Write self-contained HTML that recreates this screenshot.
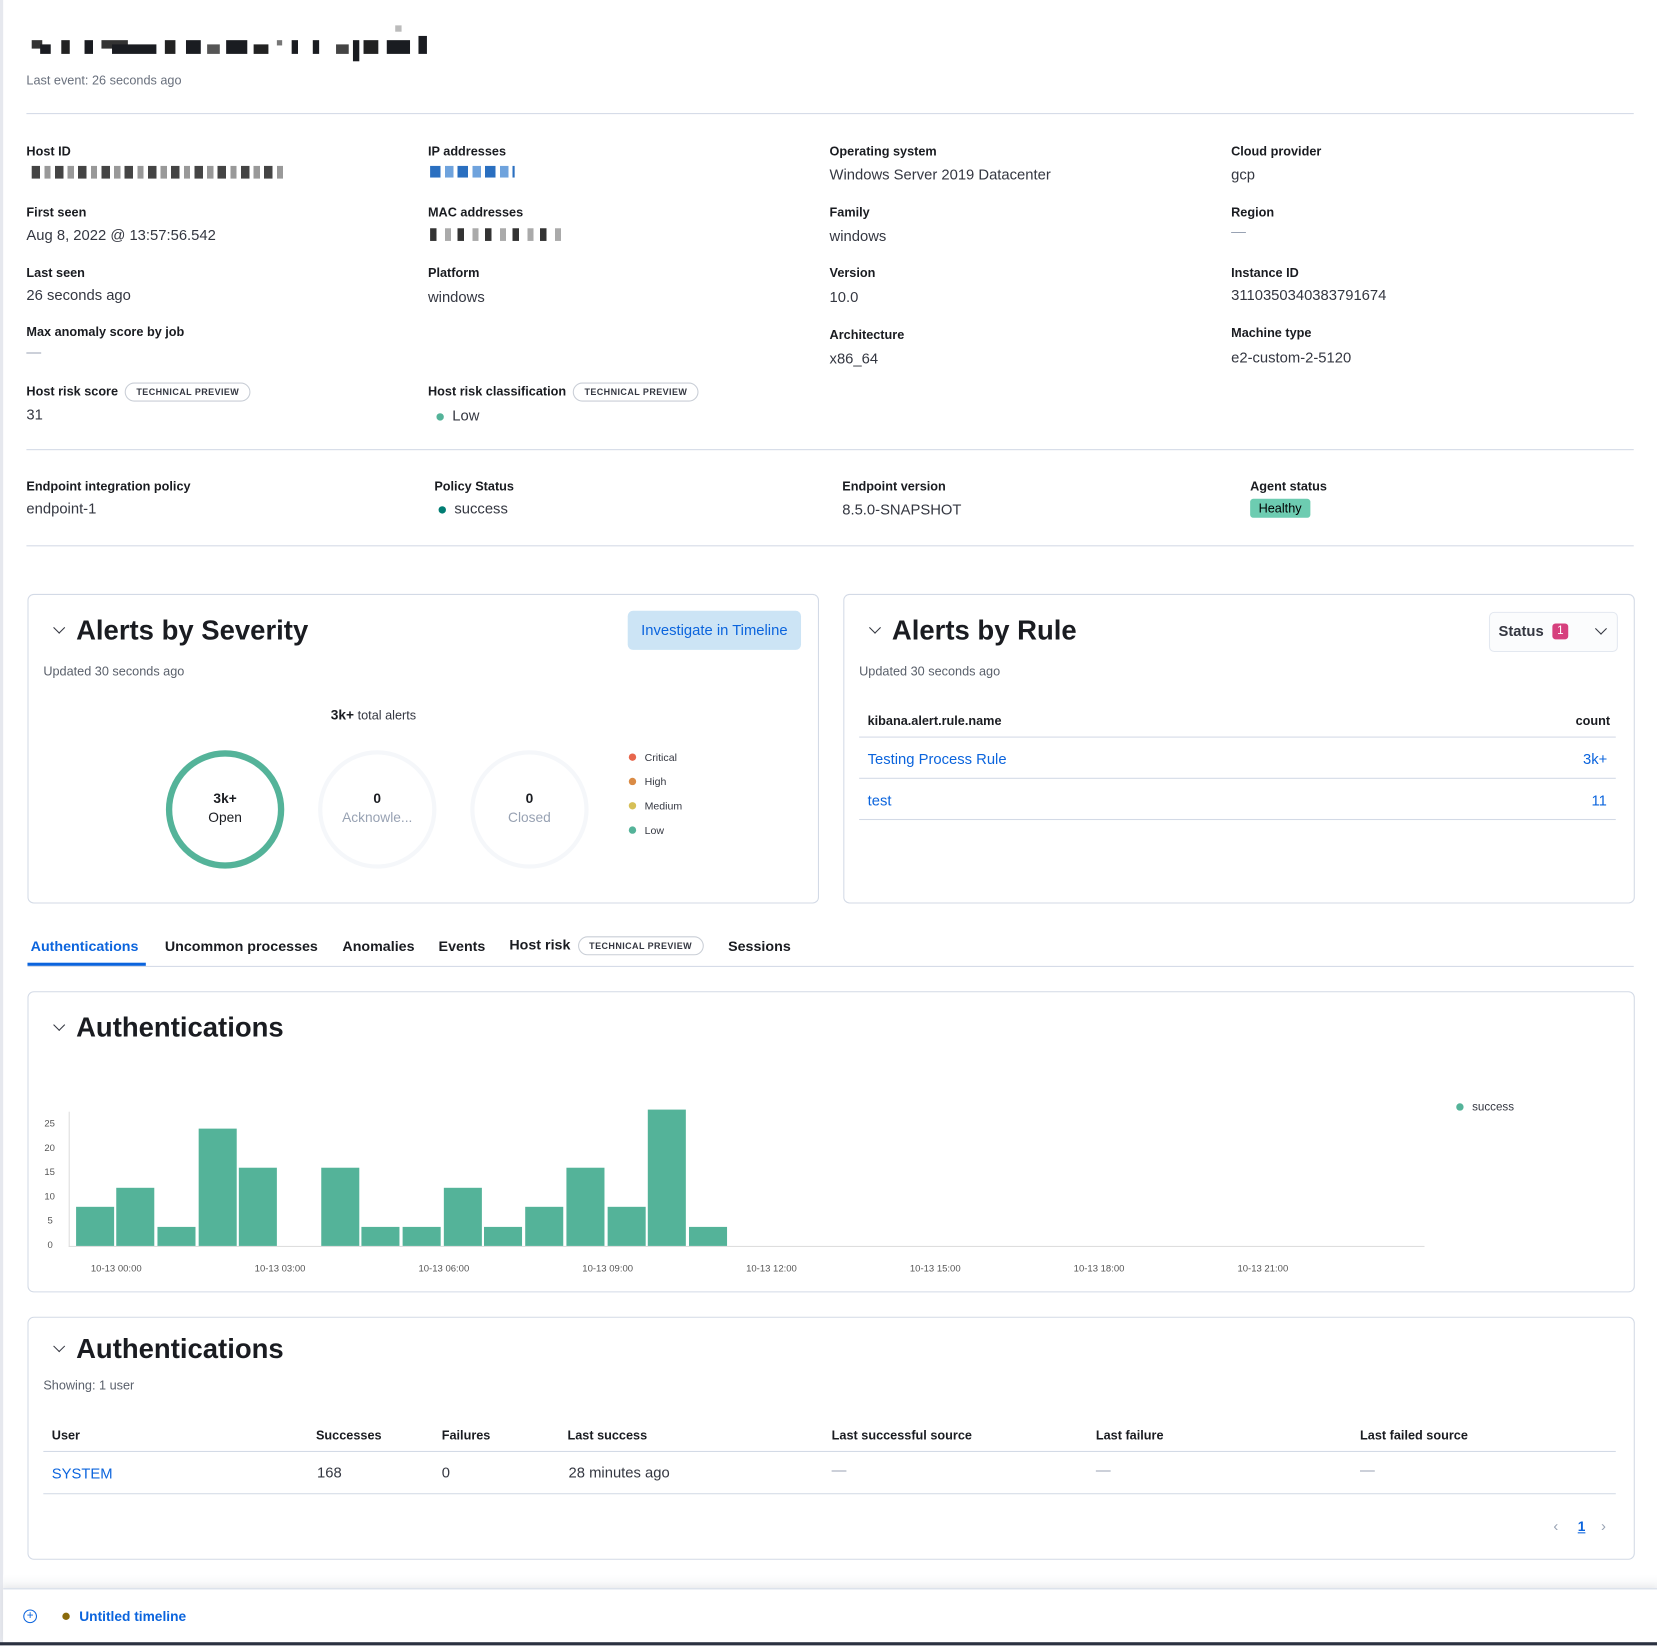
<!DOCTYPE html>
<html><head><meta charset="utf-8">
<style>
html,body{margin:0;padding:0;background:#fff;overflow:hidden;width:1657px;height:1646px}
#w{position:absolute;left:0;top:0;width:1568px;height:1557px;transform:scale(1.05676);transform-origin:0 0;font-family:"Liberation Sans",sans-serif;color:#343741}
.a{position:absolute;white-space:nowrap}
.l{font-size:12px;font-weight:bold;color:#1a1c21}
.v{font-size:14px;color:#343741}
.hr{position:absolute;height:1px;background:#d3dae6}
.card{position:absolute;border:1px solid #d3dae6;border-radius:6px;background:#fff}
.tp{display:inline-block;border:1px solid #c9ced6;border-radius:10px;font-size:8.5px;font-weight:bold;letter-spacing:.4px;padding:3px 10px;color:#343741;vertical-align:middle}
.t{font-size:26px;font-weight:bold;color:#1a1c21}
.chev{position:absolute;width:7px;height:7px;border-right:1.5px solid #343741;border-bottom:1.5px solid #343741;transform:rotate(45deg)}
.dot{display:inline-block;width:8px;height:8px;border-radius:50%;margin-right:8px}
.px{position:absolute}
.link{color:#0b64dd}
.bar{position:absolute;background:#54b399;width:36px}
.ax{position:absolute;font-size:9px;color:#555}
.tab{font-size:13.5px;font-weight:bold;color:#1a1c21}
</style></head><body><div id="w">
<div class="a" style="left:0;top:0;width:3px;height:1557px;background:#e6e8ee"></div>

<div class="px" style="left:30px;top:38px;width:10px;height:8px;background:#333"></div>
<div class="px" style="left:38px;top:42px;width:10px;height:9px;background:#1a1c21"></div>
<div class="px" style="left:58px;top:38px;width:8px;height:13px;background:#222"></div>
<div class="px" style="left:80px;top:38px;width:8px;height:13px;background:#1a1c21"></div>
<div class="px" style="left:96px;top:38px;width:25px;height:8px;background:#333"></div>
<div class="px" style="left:106px;top:42px;width:42px;height:9px;background:#1a1c21"></div>
<div class="px" style="left:156px;top:38px;width:10px;height:13px;background:#222"></div>
<div class="px" style="left:176px;top:38px;width:14px;height:13px;background:#1a1c21"></div>
<div class="px" style="left:196px;top:42px;width:12px;height:9px;background:#555"></div>
<div class="px" style="left:214px;top:38px;width:20px;height:13px;background:#1a1c21"></div>
<div class="px" style="left:240px;top:42px;width:14px;height:9px;background:#222"></div>
<div class="px" style="left:262px;top:38px;width:5px;height:5px;background:#777"></div>
<div class="px" style="left:276px;top:38px;width:6px;height:13px;background:#1a1c21"></div>
<div class="px" style="left:296px;top:38px;width:6px;height:13px;background:#1a1c21"></div>
<div class="px" style="left:318px;top:42px;width:12px;height:9px;background:#444"></div>
<div class="px" style="left:334px;top:38px;width:6px;height:20px;background:#1a1c21"></div>
<div class="px" style="left:344px;top:38px;width:14px;height:13px;background:#222"></div>
<div class="px" style="left:374px;top:24px;width:6px;height:6px;background:#bbb"></div>
<div class="px" style="left:366px;top:38px;width:22px;height:13px;background:#1a1c21"></div>
<div class="px" style="left:396px;top:34px;width:8px;height:17px;background:#1a1c21"></div>
<div class="a" style="left:25px;top:69px;font-size:12px;color:#69707d">Last event: 26 seconds ago</div>
<div class="hr" style="left:25px;top:107px;width:1521px"></div>

<div class="a l" style="left:25px;top:136px">Host ID</div>
<div class="px" style="left:30px;top:157px;width:240px;height:12px;background:repeating-linear-gradient(90deg,#444 0 8px,#fff 8px 12px,#999 12px 18px,#fff 18px 22px)"></div>
<div class="a l" style="left:405px;top:136px">IP addresses</div>
<div class="px" style="left:407px;top:157px;width:80px;height:11px;background:repeating-linear-gradient(90deg,#2a6fc0 0 10px,#fff 10px 14px,#6fa3dd 14px 22px,#fff 22px 26px)"></div>
<div class="a l" style="left:785px;top:136px">Operating system</div>
<div class="a v" style="left:785px;top:157px">Windows Server 2019 Datacenter</div>
<div class="a l" style="left:1165px;top:136px">Cloud provider</div>
<div class="a v" style="left:1165px;top:157px">gcp</div>

<div class="a l" style="left:25px;top:194px">First seen</div>
<div class="a v" style="left:25px;top:214px">Aug 8, 2022 @ 13:57:56.542</div>
<div class="a l" style="left:405px;top:194px">MAC addresses</div>
<div class="px" style="left:407px;top:216px;width:128px;height:12px;background:repeating-linear-gradient(90deg,#333 0 6px,#fff 6px 14px,#aaa 14px 20px,#fff 20px 26px)"></div>
<div class="a l" style="left:785px;top:194px">Family</div>
<div class="a v" style="left:785px;top:215px">windows</div>
<div class="a l" style="left:1165px;top:194px">Region</div>
<div class="a v" style="left:1165px;top:211px;color:#98a2b3">—</div>

<div class="a l" style="left:25px;top:251px">Last seen</div>
<div class="a v" style="left:25px;top:271px">26 seconds ago</div>
<div class="a l" style="left:405px;top:251px">Platform</div>
<div class="a v" style="left:405px;top:273px">windows</div>
<div class="a l" style="left:785px;top:251px">Version</div>
<div class="a v" style="left:785px;top:273px">10.0</div>
<div class="a l" style="left:1165px;top:251px">Instance ID</div>
<div class="a v" style="left:1165px;top:271px">3110350340383791674</div>

<div class="a l" style="left:25px;top:307px">Max anomaly score by job</div>
<div class="a v" style="left:25px;top:325px;color:#98a2b3">—</div>
<div class="a l" style="left:785px;top:310px">Architecture</div>
<div class="a v" style="left:785px;top:331px">x86_64</div>
<div class="a l" style="left:1165px;top:308px">Machine type</div>
<div class="a v" style="left:1165px;top:330px">e2-custom-2-5120</div>

<div class="a l" style="left:25px;top:362px">Host risk score <span class="tp" style="margin-left:3px">TECHNICAL PREVIEW</span></div>
<div class="a v" style="left:25px;top:384px">31</div>
<div class="a l" style="left:405px;top:362px">Host risk classification <span class="tp" style="margin-left:3px">TECHNICAL PREVIEW</span></div>
<div class="a v" style="left:413px;top:385px"><span class="dot" style="background:#54b399;width:7px;height:7px"></span>Low</div>
<div class="hr" style="left:25px;top:425px;width:1521px"></div>

<div class="a l" style="left:25px;top:453px">Endpoint integration policy</div>
<div class="a v" style="left:25px;top:473px">endpoint-1</div>
<div class="a l" style="left:411px;top:453px">Policy Status</div>
<div class="a v" style="left:415px;top:473px"><span class="dot" style="background:#017d73;width:7px;height:7px"></span>success</div>
<div class="a l" style="left:797px;top:453px">Endpoint version</div>
<div class="a v" style="left:797px;top:474px">8.5.0-SNAPSHOT</div>
<div class="a l" style="left:1183px;top:453px">Agent status</div>
<div class="a" style="left:1183px;top:472px;background:#6dccb1;border-radius:3px;font-size:12px;padding:2px 8px;color:#000">Healthy</div>
<div class="hr" style="left:25px;top:516px;width:1521px"></div>

<div class="card" style="left:26px;top:562px;width:747px;height:291px"></div>
<div class="chev" style="left:52px;top:590px"></div>
<div class="a t" style="left:72px;top:581px">Alerts by Severity</div>
<div class="a" style="left:594px;top:578px;width:164px;height:37px;background:#cce4f5;border-radius:5px;color:#0b64dd;font-size:14px;line-height:37px;text-align:center">Investigate in Timeline</div>
<div class="a" style="left:41px;top:628px;font-size:12px;color:#5a606b">Updated 30 seconds ago</div>
<div class="a" style="left:313px;top:669px;font-size:12px;color:#343741"><b style="font-size:13px;color:#1a1c21">3k+</b> total alerts</div>
<div class="a" style="left:157px;top:710px;width:100px;height:100px;border:6px solid #54b399;border-radius:50%"></div>
<div class="a" style="left:157px;top:747px;width:112px;text-align:center;font-size:13px;line-height:18px;color:#1a1c21"><b>3k+</b><br>Open</div>
<div class="a" style="left:301px;top:710px;width:104px;height:104px;border:4px solid #f5f7fa;border-radius:50%"></div>
<div class="a" style="left:301px;top:747px;width:112px;text-align:center;font-size:13px;line-height:18px;color:#98a2b3"><b style="color:#1a1c21">0</b><br>Acknowle...</div>
<div class="a" style="left:445px;top:710px;width:104px;height:104px;border:4px solid #f5f7fa;border-radius:50%"></div>
<div class="a" style="left:445px;top:747px;width:112px;text-align:center;font-size:13px;line-height:18px;color:#98a2b3"><b style="color:#1a1c21">0</b><br>Closed</div>
<div class="a" style="left:595px;top:706px;font-size:10px;line-height:23px;color:#343741">
<div><span class="dot" style="background:#e7664c;width:7px;height:7px"></span>Critical</div>
<div><span class="dot" style="background:#da8b45;width:7px;height:7px"></span>High</div>
<div><span class="dot" style="background:#d6bf57;width:7px;height:7px"></span>Medium</div>
<div><span class="dot" style="background:#54b399;width:7px;height:7px"></span>Low</div></div>

<div class="card" style="left:798px;top:562px;width:747px;height:291px"></div>
<div class="chev" style="left:824px;top:590px"></div>
<div class="a t" style="left:844px;top:581px">Alerts by Rule</div>
<div class="a" style="left:1409px;top:579px;width:120px;height:36px;border:1px solid #e3e8f0;border-radius:5px;background:#fbfcfd"></div>
<div class="a" style="left:1418px;top:589px;font-size:14px;font-weight:bold;color:#343741">Status</div>
<div class="a" style="left:1469px;top:590px;width:15px;height:15px;background:#d6407d;border-radius:3px;color:#fff;font-size:11px;text-align:center;line-height:15px">1</div>
<div class="chev" style="left:1511px;top:591px"></div>
<div class="a" style="left:813px;top:628px;font-size:12px;color:#5a606b">Updated 30 seconds ago</div>
<div class="a" style="left:821px;top:675px;font-size:12px;font-weight:bold;color:#1a1c21">kibana.alert.rule.name</div>
<div class="a" style="left:1491px;top:675px;font-size:12px;font-weight:bold;color:#1a1c21">count</div>
<div class="hr" style="left:813px;top:697px;width:716px"></div>
<div class="a link" style="left:821px;top:710px;font-size:14px">Testing Process Rule</div>
<div class="a link" style="left:1498px;top:710px;font-size:14px">3k+</div>
<div class="hr" style="left:813px;top:736px;width:716px"></div>
<div class="a link" style="left:821px;top:749px;font-size:14px">test</div>
<div class="a link" style="left:1506px;top:749px;font-size:14px">11</div>
<div class="hr" style="left:813px;top:775px;width:716px"></div>

<div class="a tab" style="left:29px;top:888px;color:#0b64dd">Authentications</div>
<div class="a" style="left:26px;top:911px;width:112px;height:3px;background:#0b64dd"></div>
<div class="a tab" style="left:156px;top:888px">Uncommon processes</div>
<div class="a tab" style="left:324px;top:888px">Anomalies</div>
<div class="a tab" style="left:415px;top:888px">Events</div>
<div class="a tab" style="left:482px;top:886px">Host risk <span class="tp" style="margin-left:3px">TECHNICAL PREVIEW</span></div>
<div class="a tab" style="left:689px;top:888px">Sessions</div>
<div class="hr" style="left:26px;top:914px;width:1520px"></div>

<div class="card" style="left:26px;top:938px;width:1519px;height:283px"></div>
<div class="chev" style="left:52px;top:966px"></div>
<div class="a t" style="left:72px;top:957px">Authentications</div>
<div class="a" style="left:1378px;top:1042px;font-size:11px;color:#343741"><span class="dot" style="background:#54b399;width:7px;height:7px"></span>success</div>
<div class="a" style="left:65px;top:1052px;width:1px;height:128px;background:#ddd"></div>
<div class="a" style="left:65px;top:1179px;width:1283px;height:1px;background:#ddd"></div>
<div class="ax" style="left:42px;top:1058px">25</div>
<div class="ax" style="left:42px;top:1081px">20</div>
<div class="ax" style="left:42px;top:1104px">15</div>
<div class="ax" style="left:42px;top:1127px">10</div>
<div class="ax" style="left:45px;top:1150px">5</div>
<div class="ax" style="left:45px;top:1173px">0</div>
<div class="bar" style="left:72px;top:1142px;height:37px"></div>
<div class="bar" style="left:110px;top:1124px;height:55px"></div>
<div class="bar" style="left:149px;top:1161px;height:18px"></div>
<div class="bar" style="left:188px;top:1068px;height:111px"></div>
<div class="bar" style="left:226px;top:1105px;height:74px"></div>
<div class="bar" style="left:304px;top:1105px;height:74px"></div>
<div class="bar" style="left:342px;top:1161px;height:18px"></div>
<div class="bar" style="left:381px;top:1161px;height:18px"></div>
<div class="bar" style="left:420px;top:1124px;height:55px"></div>
<div class="bar" style="left:458px;top:1161px;height:18px"></div>
<div class="bar" style="left:497px;top:1142px;height:37px"></div>
<div class="bar" style="left:536px;top:1105px;height:74px"></div>
<div class="bar" style="left:575px;top:1142px;height:37px"></div>
<div class="bar" style="left:613px;top:1050px;height:129px"></div>
<div class="bar" style="left:652px;top:1161px;height:18px"></div>
<div class="ax" style="left:86px;top:1195px">10-13 00:00</div>
<div class="ax" style="left:241px;top:1195px">10-13 03:00</div>
<div class="ax" style="left:396px;top:1195px">10-13 06:00</div>
<div class="ax" style="left:551px;top:1195px">10-13 09:00</div>
<div class="ax" style="left:706px;top:1195px">10-13 12:00</div>
<div class="ax" style="left:861px;top:1195px">10-13 15:00</div>
<div class="ax" style="left:1016px;top:1195px">10-13 18:00</div>
<div class="ax" style="left:1171px;top:1195px">10-13 21:00</div>

<div class="card" style="left:26px;top:1246px;width:1519px;height:228px"></div>
<div class="chev" style="left:52px;top:1270px"></div>
<div class="a t" style="left:72px;top:1261px">Authentications</div>
<div class="a" style="left:41px;top:1304px;font-size:12px;color:#5a606b">Showing: 1 user</div>
<div class="a l" style="left:49px;top:1351px">User</div>
<div class="a l" style="left:299px;top:1351px">Successes</div>
<div class="a l" style="left:418px;top:1351px">Failures</div>
<div class="a l" style="left:537px;top:1351px">Last success</div>
<div class="a l" style="left:787px;top:1351px">Last successful source</div>
<div class="a l" style="left:1037px;top:1351px">Last failure</div>
<div class="a l" style="left:1287px;top:1351px">Last failed source</div>
<div class="hr" style="left:41px;top:1373px;width:1488px"></div>
<div class="a link" style="left:49px;top:1386px;font-size:14px">SYSTEM</div>
<div class="a v" style="left:300px;top:1385px">168</div>
<div class="a v" style="left:418px;top:1385px">0</div>
<div class="a v" style="left:538px;top:1385px">28 minutes ago</div>
<div class="a v" style="left:787px;top:1383px;color:#98a2b3">—</div>
<div class="a v" style="left:1037px;top:1383px;color:#98a2b3">—</div>
<div class="a v" style="left:1287px;top:1383px;color:#98a2b3">—</div>
<div class="hr" style="left:41px;top:1413px;width:1488px"></div>
<div class="a" style="left:1470px;top:1436px;font-size:14px;color:#98a2b3">‹</div>
<div class="a link" style="left:1493px;top:1437px;font-size:13px;font-weight:bold;text-decoration:underline">1</div>
<div class="a" style="left:1515px;top:1436px;font-size:14px;color:#98a2b3">›</div>

<div class="a" style="left:3px;top:1490px;width:1565px;height:14px;background:linear-gradient(#fff,#f4f5f7)"></div>
<div class="a" style="left:3px;top:1503px;width:1565px;height:51px;background:#fff;border-top:1px solid #d3dae6;box-shadow:0 -2px 6px rgba(0,0,0,.05)"></div>
<div class="a" style="left:22px;top:1523px;width:11px;height:11px;border:1px solid #0b64dd;border-radius:50%;color:#0b64dd;font-size:11px;line-height:11px;text-align:center">+</div>
<div class="a" style="left:59px;top:1526px;width:7px;height:7px;border-radius:50%;background:#8a6a0a"></div>
<div class="a link" style="left:75px;top:1522px;font-size:13px;font-weight:bold">Untitled timeline</div>
<div class="a" style="left:0;top:1554px;width:1568px;height:3px;background:#2b3140"></div>
</div></body></html>
